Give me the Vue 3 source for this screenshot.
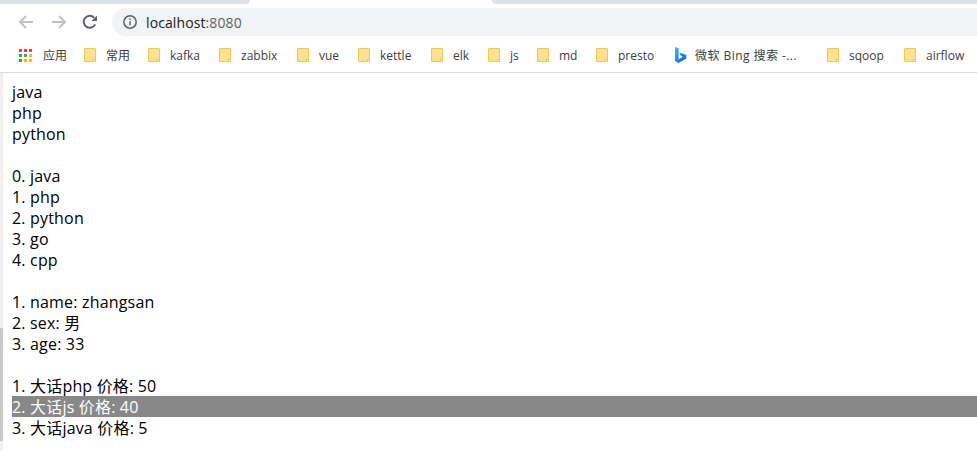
<script setup>
const folders1 = [
  { label: '常用', w: 64 }, { label: 'kafka', w: 71 }, { label: 'zabbix', w: 78 },
  { label: 'vue', w: 61 }, { label: 'kettle', w: 73 }, { label: 'elk', w: 57 },
  { label: 'js', w: 49 }, { label: 'md', w: 59 }, { label: 'presto', w: 78 },
]
const folders2 = [{ label: 'sqoop', w: 77 }, { label: 'airflow', w: 73 }]
const appColors = ['#ea4335','#ea4335','#ea4335','#34a853','#4285f4','#fbbc05','#34a853','#fbbc05','#fbbc05']
const langs = ['java', 'php', 'python']
const indexed = ['java', 'php', 'python', 'go', 'cpp']
const person = [['name', 'zhangsan'], ['sex', '男'], ['age', 33]]
const books = [
  { name: '大话php', price: 50, active: false },
  { name: '大话js', price: 40, active: true },
  { name: '大话java', price: 5, active: false },
]
</script>

<template>
  <div class="window">
    <div class="tabstrip">
      <div class="tab-a"></div>
      <div class="tab-gap"></div>
      <div class="tab-b"></div>
    </div>
    <div class="toolbar">
      <svg class="nav first" width="18" height="16" viewBox="0 0 18 16" fill="none" stroke="#c0c2c5" stroke-width="2"><path d="M16 8H3M9 2 3 8l6 6"/></svg>
      <svg class="nav" width="18" height="16" viewBox="0 0 18 16" fill="none" stroke="#c0c2c5" stroke-width="2"><path d="M2 8h13M9 2l6 6-6 6"/></svg>
      <svg class="nav reload" width="16" height="16" viewBox="0 0 16 16" fill="none"><path d="M13.2 10.4A6 6 0 1 1 12.2 3.7" stroke="#5f6368" stroke-width="2"/><path d="M15 1.4V7H9.4z" fill="#5f6368"/></svg>
      <div class="omnibox">
        <svg width="16" height="16" viewBox="0 0 16 16" fill="none"><circle cx="8" cy="8" r="6.2" stroke="#5f6368" stroke-width="1.5"/><path d="M8 7.2v4M8 4.4v1.6" stroke="#5f6368" stroke-width="1.5"/></svg>
        <span class="url"><span class="host">localhost</span>:8080</span>
      </div>
    </div>
    <div class="bookmarks">
      <div class="bm apps">
        <span class="grid"><i v-for="(c, i) in appColors" :key="i" :style="{ background: c }"></i></span>
        <span>应用</span>
      </div>
      <div v-for="b in folders1" :key="b.label" class="bm" :style="{ width: b.w + 'px' }">
        <span class="folder"></span><span>{{ b.label }}</span>
      </div>
      <div class="bm bing">
        <svg width="13" height="17" viewBox="0 0 13 17"><defs><linearGradient id="bg" x1="0" y1="0" x2="1" y2="1"><stop offset="0" stop-color="#37bdff"/><stop offset="1" stop-color="#1558d6"/></linearGradient></defs><path d="M1 0l3.6 1.3v10.9l4.2-2.4-2.1-1L5.3 5.4l7 2.5v3.6L4.6 16 1 14z" fill="url(#bg)"/></svg>
        <span class="bing-text">微软 Bing 搜索 -...</span>
      </div>
      <div v-for="b in folders2" :key="b.label" class="bm" :style="{ width: b.w + 'px' }">
        <span class="folder"></span><span>{{ b.label }}</span>
      </div>
    </div>
    <div class="page">
      <div class="thumb"></div>
      <div class="content">
        <div v-for="l in langs" :key="l" class="line">{{ l }}</div>
        <div class="line"><br /></div>
        <div v-for="(l, i) in indexed" :key="l" class="line">{{ i }}. {{ l }}</div>
        <div class="line"><br /></div>
        <div v-for="(p, i) in person" :key="p[0]" class="line">{{ i + 1 }}. {{ p[0] }}: {{ p[1] }}</div>
        <div class="line"><br /></div>
        <div v-for="(b, i) in books" :key="b.name" class="line" :class="{ active: b.active }">{{ i + 1 }}. {{ b.name }} 价格: {{ b.price }}</div>
      </div>
    </div>
  </div>
</template>

<style>
html, body { margin: 0; background: #fff; overflow: hidden; }
</style>

<style scoped>
.window { width: 977px; height: 451px; display: flex; flex-direction: column; overflow: hidden; font-family: "Open Sans", "Noto Sans CJK SC", sans-serif; }
.tabstrip { height: 4px; display: flex; background: #fff; flex: none; }
.tab-a { width: 250px; background: #dee1e6; border-bottom-right-radius: 6px; }
.tab-gap { width: 242px; }
.tab-b { flex: 1; background: #dee1e6; border-bottom-left-radius: 6px; }
.toolbar { height: 32px; margin-top: 2px; display: flex; align-items: center; flex: none; }
.nav { margin-left: 15px; flex: none; }
.nav.first { margin-left: 17px; }
.nav.reload { margin-left: 14px; }
.omnibox { margin-left: 14px; flex: 1; height: 28px; background: #f1f3f4; border-top-left-radius: 14px; border-bottom-left-radius: 14px; display: flex; align-items: center; padding-left: 10px; gap: 8px; }
.url { font-size: 14px; color: #5f6368; letter-spacing: 0.1px; }
.host { color: #202124; }
.bookmarks { height: 34px; display: flex; align-items: center; flex: none; border-bottom: 1px solid #dadce0; font-size: 12px; color: #3c4043; }
.bm { display: flex; align-items: center; flex: none; white-space: nowrap; }
.apps { padding-left: 19px; width: 84px; box-sizing: border-box; gap: 11px; }
.grid { display: grid; grid-template-columns: repeat(3, 3px); grid-auto-rows: 3px; gap: 2px; width: 13px; }
.grid i { display: block; }
.folder { position: relative; width: 12px; height: 14px; box-sizing: border-box; margin-right: 10px; margin-top: -1px; background: #fde293; border: 1px solid #f0c94c; border-radius: 1px; flex: none; }
.folder::after { content: ""; position: absolute; right: -1px; bottom: -1px; width: 3px; height: 3px; box-sizing: border-box; background: #fff; border: 1px solid #f0c94c; }
.bing { width: 153px; box-sizing: border-box; }
.bing-text { margin-left: 8px; letter-spacing: 0.45px; }
.page { flex: 1; min-height: 0; border-left: 3px solid #f0f0f0; position: relative; }
.thumb { position: absolute; left: -3px; top: 255px; width: 3px; height: 113px; background: #c8c8c8; }
.content { padding: 8px 0 0 9px; font-size: 16px; line-height: 23px; letter-spacing: 0.18px; color: #000; }
.line { height: 21px; white-space: nowrap; }
.active { background: #888; color: #fff; }
</style>
